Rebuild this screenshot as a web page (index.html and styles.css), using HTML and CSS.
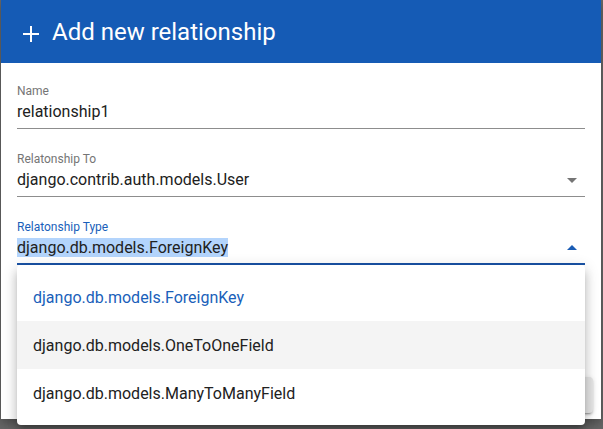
FILE: index.html
```
<!DOCTYPE html>
<html>
<head>
<meta charset="utf-8">
<link rel="stylesheet" href="styles.css">
</head>
<body>
<div class="dialog">
  <div class="header">
    <svg class="plus" width="18" height="18" viewBox="0 0 18 18"><path d="M9 1v16M1 9h16" stroke="#fff" stroke-width="2" fill="none"/></svg>
    <span class="title">Add new relationship</span>
  </div>
  <div class="fields">
    <div class="field">
      <div class="label">Name</div>
      <div class="control"><span class="value">relationship1</span></div>
    </div>
    <div class="field">
      <div class="label">Relatonship To</div>
      <div class="control"><span class="value">django.contrib.auth.models.User</span>
        <svg class="arrow" width="24" height="24" viewBox="0 0 24 24"><path d="M7 10l5 5 5-5z" fill="#757575"/></svg>
      </div>
    </div>
    <div class="field focused">
      <div class="label">Relatonship Type</div>
      <div class="control"><span class="value"><span class="sel">django.db.models.ForeignKey</span></span>
        <svg class="arrow" width="24" height="24" viewBox="0 0 24 24"><path d="M7 14l5-5 5 5z" fill="#1a5cb4"/></svg>
      </div>
    </div>
  </div>
  <div class="actions"><button class="btn">Add</button></div>
  <ul class="menu">
    <li class="item selected">django.db.models.ForeignKey</li>
    <li class="item hover">django.db.models.OneToOneField</li>
    <li class="item">django.db.models.ManyToManyField</li>
  </ul>
</div>
</body>
</html>
```
FILE: styles.css
```
html, body {
  margin: 0;
  padding: 0;
  height: 100%;
  background: #666;
  font-family: Roboto, "Liberation Sans", sans-serif;
  overflow: hidden;
}
.dialog {
  position: relative;
  margin-left: 1px;
  width: 600px;
  height: 419px;
  background: #fff;
  display: flex;
  flex-direction: column;
  box-shadow: 0 4px 10px rgba(0,0,0,0.3);
}
.header {
  height: 63px;
  background: #155bb5;
  display: flex;
  align-items: center;
  padding-left: 21px;
  box-sizing: border-box;
}
.plus {
  margin-top: 4px;
  margin-right: 12px;
}
.title {
  color: #fff;
  font-size: 24px;
  line-height: 28px;
}
.fields {
  display: flex;
  flex-direction: column;
  gap: 23px;
  padding: 21px 16px 0;
}
.field {
  display: flex;
  flex-direction: column;
  gap: 4px;
}
.label {
  font-size: 12px;
  line-height: 14px;
  color: #757575;
}
.control {
  display: flex;
  align-items: flex-start;
  font-size: 16px;
  line-height: 19px;
  color: #212121;
  padding-bottom: 7px;
  border-bottom: 1px solid #8d8d8d;
}
.value {
  flex: 1;
}
.arrow {
  margin: -2px 1px -3px 0;
}
.focused .label {
  color: #1a5fba;
}
.focused .control {
  padding-bottom: 6px;
  border-bottom: 2px solid #1a53a6;
}
.sel {
  background: #b3d4fc;
}
.actions {
  margin-top: auto;
  display: flex;
  justify-content: flex-end;
  padding: 0 8px 6px;
}
.btn {
  width: 80px;
  height: 36px;
  border: none;
  border-radius: 4px;
  background: #e6e6e6;
  color: #212121;
  font-family: Roboto, sans-serif;
  font-size: 14px;
  box-shadow: 0 3px 1px -2px rgba(0,0,0,0.2), 0 2px 2px 0 rgba(0,0,0,0.14), 0 1px 5px 0 rgba(0,0,0,0.12);
}
.menu {
  position: absolute;
  left: 16px;
  top: 265px;
  width: 568px;
  margin: 0;
  padding: 8px 0;
  list-style: none;
  background: #fff;
  border-radius: 4px;
  box-shadow: 0 5px 5px -3px rgba(0,0,0,0.2), 0 8px 10px 1px rgba(0,0,0,0.14), 0 3px 14px 2px rgba(0,0,0,0.12);
}
.item {
  height: 48px;
  display: flex;
  align-items: center;
  padding: 0 16px;
  font-size: 16px;
  line-height: 19px;
  color: #212121;
}
.item.selected {
  color: #1a5fba;
}
.item.hover {
  background: #f4f4f4;
}
```
